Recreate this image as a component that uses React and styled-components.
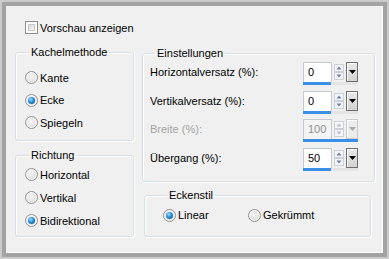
import React from 'react'
import styled, { createGlobalStyle, css } from 'styled-components'

const GlobalStyle = createGlobalStyle`
  html, body { margin: 0; padding: 0; background: #cbcbcb; }
  body {
    font-family: "Liberation Sans", Arial, sans-serif;
    font-size: 11px;
    color: #000;
  }
`

const Frame = styled.div`
  width: 389px;
  height: 259px;
  box-sizing: border-box;
  padding: 2px;
  background: #cbcbcb;
`

const Bevel = styled.div`
  height: 100%;
  box-sizing: border-box;
  border: 4px solid #a3a3a3;
`

const Panel = styled.div`
  height: 100%;
  box-sizing: border-box;
  background: #f0f0f0;
  border-right: 1px solid #fff;
  border-bottom: 1px solid #fff;
  padding: 15px 0 0 9px;
  display: flex;
  flex-direction: column;
`

const PreviewRow = styled.label`
  display: flex;
  align-items: center;
  gap: 2px;
  height: 13px;
  margin-left: 10px;
`

const CheckBox = styled.span`
  width: 13px;
  height: 13px;
  box-sizing: border-box;
  border: 1px solid #8f8f8f;
  background: #fff;
  padding: 2px;
  flex: none;
  &::before {
    content: '';
    display: block;
    width: 100%;
    height: 100%;
    box-sizing: border-box;
    border: 1px solid #c9c9c9;
    background: linear-gradient(135deg, #d8d8d8, #f6f6f6);
  }
`

const Columns = styled.div`
  display: flex;
  align-items: flex-start;
  gap: 8px;
  margin-top: 12px;
`

const Column = styled.div`
  display: flex;
  flex-direction: column;
  width: ${p => p.$w}px;
  margin-top: ${p => p.$top || 0}px;
`

const Group = styled.fieldset`
  margin: ${p => p.$margin || '0'};
  min-width: 0;
  border: 1px solid #d5dfe5;
  border-radius: 3px;
  box-shadow: inset 1px 1px 0 #fff, 1px 1px 0 #fff;
  padding: ${p => p.$pad};
  display: flex;
  flex-direction: ${p => (p.$row ? 'row' : 'column')};
  gap: ${p => p.$gap || 0}px;
`

const Legend = styled.legend`
  margin-left: ${p => p.$ml || 4}px;
  padding: 0 2px;
  line-height: 13px;
`

const Option = styled.label`
  display: flex;
  align-items: center;
  gap: 2px;
  height: 13px;
  min-width: ${p => p.$minw || 0}px;
`

const RadioDot = styled.span`
  position: relative;
  width: 13px;
  height: 13px;
  flex: none;
  box-sizing: border-box;
  border-radius: 50%;
  border: 1px solid #8e8f8f;
  box-shadow: inset 0 0 0 1px #fff;
  background: radial-gradient(circle at 45% 40%, #f6f6f6 0%, #e2e2e2 55%, #c7c7c7 100%);
  ${p => p.$on && css`
    &::after {
      content: '';
      position: absolute;
      left: 2px;
      top: 2px;
      width: 7px;
      height: 7px;
      border-radius: 50%;
      background: radial-gradient(circle at 40% 35%, #9fe0ff 0%, #2a8fd6 45%, #0b4f86 100%);
    }
  `}
`

const SettingRow = styled.div`
  display: flex;
  align-items: flex-start;
  justify-content: space-between;
  height: 23px;
`

const Label = styled.span`
  line-height: 20px;
  color: ${p => (p.$disabled ? '#a3a3a3' : '#000')};
`

const Spin = styled.div`
  width: 55px;
  display: flex;
  flex-direction: column;
`

const SpinTop = styled.div`
  display: flex;
  height: 20px;
`

const Field = styled.div`
  width: 29px;
  box-sizing: border-box;
  border: 1px solid #c5c9d1;
  border-bottom: none;
  background: ${p => (p.$disabled ? '#f4f4f4' : '#fff')};
  padding-left: 4px;
  line-height: 19px;
  color: ${p => (p.$disabled ? '#8f8f8f' : '#000')};
`

const Arrows = styled.svg`
  margin: 2px 0 0 2px;
  flex: none;
`

const DropButton = styled.div`
  width: 12px;
  margin-left: 2px;
  box-sizing: border-box;
  display: flex;
  align-items: center;
  justify-content: center;
  border: 1px solid ${p => (p.$disabled ? '#c9c9c9' : '#6e6e6e')};
  background: ${p => (p.$disabled ? '#ececec' : 'linear-gradient(#e9e9e9, #d2d2d2)')};
  box-shadow: inset 1px 1px 0 #fff;
`

const Track = styled.div`
  height: 3px;
  background: #e4e4e4;
`

const Fill = styled.div`
  height: 100%;
  background: #3b8fe6;
`

const SpinBox = ({ value, disabled }) => {
  const arrow = disabled ? '#b9bfcc' : '#6f80a8'
  return (
    <Spin>
      <SpinTop>
        <Field $disabled={disabled}>{value}</Field>
        <Arrows width="10" height="17" viewBox="0 0 10 17">
          <rect x="0.5" y="0.5" width="9" height="7" fill="#f4f5f8" stroke="#ccd0d8" />
          <rect x="0.5" y="8.5" width="9" height="7" fill="#f4f5f8" stroke="#ccd0d8" />
          <polygon points="2.5,5.5 7.5,5.5 5,2.5" fill={arrow} />
          <polygon points="2.5,10.5 7.5,10.5 5,13.5" fill={arrow} />
        </Arrows>
        <DropButton $disabled={disabled}>
          <svg width="7" height="4" viewBox="0 0 7 4">
            <polygon points="0,0 7,0 3.5,4" fill={disabled ? '#a8a8a8' : '#000'} />
          </svg>
        </DropButton>
      </SpinTop>
      <Track>
        <Fill style={{ width: disabled ? '100%' : 28 }} />
      </Track>
    </Spin>
  )
}

const Radio = ({ label, on, minw }) => (
  <Option $minw={minw}>
    <RadioDot $on={on} />
    {label}
  </Option>
)

const settings = [
  { label: 'Horizontalversatz (%):', value: '0' },
  { label: 'Vertikalversatz (%):', value: '0' },
  { label: 'Breite (%):', value: '100', disabled: true },
  { label: 'Übergang (%):', value: '50' },
]

export default function App() {
  return (
    <Frame>
      <GlobalStyle />
      <Bevel>
        <Panel>
          <PreviewRow>
            <CheckBox />
            Vorschau anzeigen
          </PreviewRow>
          <Columns>
            <Column $w={119}>
              <Group $pad="12px 0 11px 9px" $gap={9.5}>
                <Legend>Kachelmethode</Legend>
                <Radio label="Kante" />
                <Radio label="Ecke" on />
                <Radio label="Spiegeln" />
              </Group>
              <Group $margin="8px 0 0 0" $pad="6px 0 9px 9px" $gap={10}>
                <Legend>Richtung</Legend>
                <Radio label="Horizontal" />
                <Radio label="Vertikal" />
                <Radio label="Bidirektional" on />
              </Group>
            </Column>
            <Column $w={233} $top={1}>
              <Group $pad="2px 16px 10px 7px" $gap={5.5}>
                <Legend $ml={5}>Einstellungen</Legend>
                {settings.map(s => (
                  <SettingRow key={s.label}>
                    <Label $disabled={s.disabled}>{s.label}</Label>
                    <SpinBox value={s.value} disabled={s.disabled} />
                  </SettingRow>
                ))}
              </Group>
              <Group $row $margin="7px 4px 0 2px" $pad="7px 0 14px 18px">
                <Legend>Eckenstil</Legend>
                <Radio label="Linear" on minw={85} />
                <Radio label="Gekrümmt" />
              </Group>
            </Column>
          </Columns>
        </Panel>
      </Bevel>
    </Frame>
  )
}
